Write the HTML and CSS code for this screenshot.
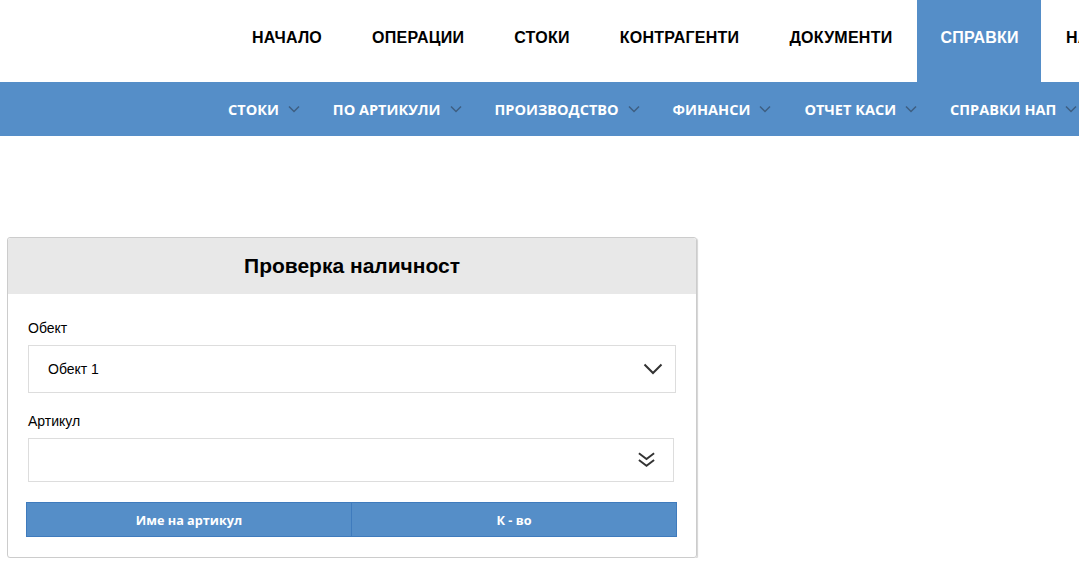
FILE: index.html
```html
<!DOCTYPE html>
<html lang="bg">
	<head>
		<meta charset="utf-8">
		<title>Проверка наличност</title>
		<link rel="stylesheet" href="styles.css">
	</head>
	<body>
		<header class="top">
			<nav class="main-nav">
				<a href="#">Начало</a>
				<a href="#">Операции</a>
				<a href="#">Стоки</a>
				<a href="#">Контрагенти</a>
				<a href="#">Документи</a>
				<a href="#" class="active">Справки</a>
				<a href="#">Настройки</a>
			</nav>
			<nav class="sub-nav">
				<a href="#">Стоки<svg class="caret" viewBox="0 0 12 8"><path d="M1 1.5l5 5 5-5"/></svg></a>
				<a href="#">По артикули<svg class="caret" viewBox="0 0 12 8"><path d="M1 1.5l5 5 5-5"/></svg></a>
				<a href="#">Производство<svg class="caret" viewBox="0 0 12 8"><path d="M1 1.5l5 5 5-5"/></svg></a>
				<a href="#">Финанси<svg class="caret" viewBox="0 0 12 8"><path d="M1 1.5l5 5 5-5"/></svg></a>
				<a href="#">Отчет каси<svg class="caret" viewBox="0 0 12 8"><path d="M1 1.5l5 5 5-5"/></svg></a>
				<a href="#">Справки НАП<svg class="caret" viewBox="0 0 12 8"><path d="M1 1.5l5 5 5-5"/></svg></a>
			</nav>
		</header>

		<section class="card">
			<h2 class="card-title">Проверка наличност</h2>
			<div class="card-body">
				<label class="field-label">Обект</label>
				<div class="select">
					<span>Обект 1</span>
					<svg class="select-arrow" viewBox="0 0 20 12"><path d="M1.5 1.5l8.5 8.5 8.5-8.5"/></svg>
				</div>

				<label class="field-label">Артикул</label>
				<div class="select select-search">
					<span></span>
					<svg class="select-double" viewBox="0 0 20 18"><path d="M2 2l8 6 8-6"/><path d="M2 9l8 6 8-6"/></svg>
				</div>

				<table class="stock-table">
					<thead>
						<tr>
							<th>Име на артикул</th>
							<th>К - во</th>
						</tr>
					</thead>
				</table>
			</div>
		</section>
	</body>
</html>
```

FILE: styles.css
```css
*
{
	box-sizing: border-box;
}

body
{
	margin: 0;
	font-family: "Liberation Sans", Arial, sans-serif;
	color: #000;
	background: #fff;
	overflow: hidden;
}

a
{
	text-decoration: none;
}

.top
{
	margin-bottom: 101px;
}

.main-nav
{
	display: flex;
	height: 82px;
	padding-left: 227px;
	white-space: nowrap;
	overflow: hidden;
}

.main-nav a
{
	display: flex;
	align-items: center;
	padding: 0 25px 6px;
	font-size: 16px;
	font-weight: bold;
	letter-spacing: 0.25px;
	text-transform: uppercase;
	color: #000;
}

.main-nav a.active
{
	background: #558ec8;
	color: #fff;
	padding: 0 22px 6px 23px;
}

.sub-nav
{
	display: flex;
	height: 54px;
	padding-left: 228px;
	background: #558ec8;
	white-space: nowrap;
	overflow: hidden;
}

.sub-nav a
{
	display: flex;
	align-items: center;
	margin-right: 33px;
	font-family: "Open Sans", sans-serif;
	font-size: 14.5px;
	font-weight: bold;
	text-transform: uppercase;
	color: #fff;
}

.caret
{
	width: 12px;
	height: 8px;
	margin-left: 9px;
	fill: none;
	stroke: #3e5f82;
	stroke-width: 1.5;
}

.card
{
	width: 690px;
	margin-left: 7px;
	border: 1px solid #ccc;
	border-radius: 3px;
	box-shadow: 1px 1px 1px #d4d4d4;
}

.card-title
{
	margin: 0;
	height: 56px;
	line-height: 56px;
	background: #e8e8e8;
	text-align: center;
	font-size: 21px;
	font-weight: bold;
	border-radius: 3px 3px 0 0;
}

.card-body
{
	padding: 24px 20px 20px;
}

.field-label
{
	display: block;
	font-size: 14px;
	line-height: 20px;
	margin-bottom: 7px;
}

.select
{
	display: flex;
	align-items: center;
	justify-content: space-between;
	height: 48px;
	padding: 0 12px 0 19px;
	border: 1px solid #ddd;
	font-size: 14px;
	margin-bottom: 18px;
}

.select-arrow
{
	width: 20px;
	height: 12px;
	fill: none;
	stroke: #333;
	stroke-width: 2;
}

.select-search
{
	height: 44px;
	width: 646px;
	padding-right: 17px;
	margin-bottom: 20px;
}

.select-double
{
	width: 19px;
	height: 18px;
	fill: none;
	stroke: #333;
	stroke-width: 2;
}

.stock-table
{
	width: 651px;
	margin-left: -2px;
	border-collapse: collapse;
}

.stock-table th
{
	width: 50%;
	height: 34px;
	padding: 0;
	background: #558ec8;
	border: 1px solid #3f7bbd;
	color: #fff;
	font-family: "Open Sans", sans-serif;
	font-size: 12.7px;
	font-weight: bold;
}
```
